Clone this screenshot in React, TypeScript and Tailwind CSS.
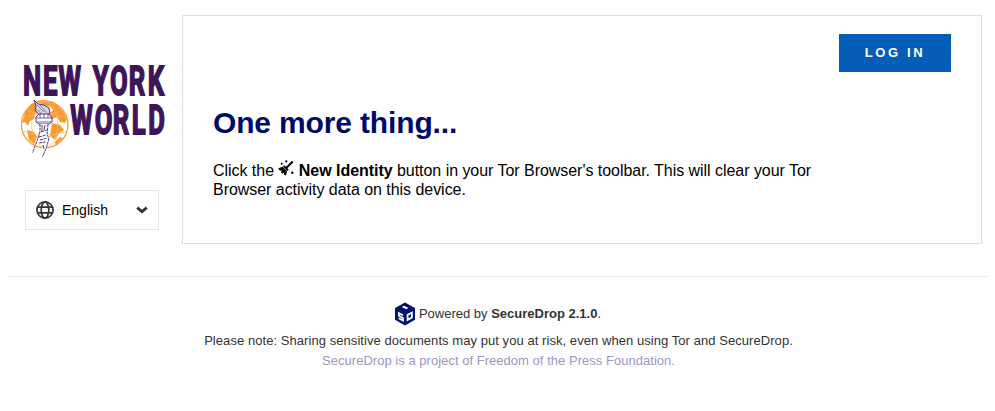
function Logo() {
  return (
    <svg className="block h-[98px] w-[150px] overflow-visible" viewBox="18 62 150 98" role="img" aria-label="New York World">
      <g fill="#3d1558" fontFamily="Roboto, sans-serif" fontWeight="700" fontSize="41.4" stroke="#3d1558" strokeWidth="1.8">
        <text transform="scale(.62 1)" x="37.3 69.2 94.4" y="95.3">NEW</text>
        <text transform="scale(.62 1)" x="149.5 177.3 207.6 238.2" y="95.3">YORK</text>
        <text transform="scale(.62 1)" x="113.4 153 182 212.4 239" y="133.6">WORLD</text>
      </g>
      <circle cx="44.7" cy="124.5" r="23.3" fill="#fff" stroke="#f9a13c" strokeWidth="1.3" />
      <g fill="#f99a2e">
        <path d="M26 110 31 104 38 102 36 107 39 111 35 114 34 119 30 121 28 126 25 122 22 123Z" />
        <path d="M48 102 56 104 63 111 67 119 65 123 60 122 57 117 52 119 49 114 53 110Z" />
        <path d="M27 130 34 132 37 137 34 144 29 140Z" />
        <path d="M52 123 60 125 64 130 59 133 55 140 50 136Z" />
        <path d="M36 101 43 100 54 102 51 107 44 105Z" />
        <path d="M54 143 60 137 63 138 57 144Z" />
      </g>
      <g fill="none" stroke="#fbb665" strokeWidth="0.7">
        <ellipse cx="44.7" cy="124.5" rx="13" ry="23" />
        <path d="M22 118Q45 110 68 118M22 131Q45 139 68 131M27 110Q45 119 63 110M28 141Q45 131 62 141" />
      </g>
      <g fill="#fff" stroke="#3d2470" strokeWidth="0.9" strokeLinejoin="round">
        <path d="M34 100 38 104 44 105 49 108 50 113 47 115H39L35 110 36 106Z" fill="#d9d6e5" />
        <path d="M37 105 44 112M40 105 47 113M36 109 42 114" strokeWidth="0.5" />
        <path d="M39 114H49L52 118V122L49 124H39L36 122V117Z" />
        <path d="M36 118H52M37 122H51M40 114V118M44 114V118M48 114V118" strokeWidth="0.7" />
        <path d="M40 124H48L47 135 49 139 47 147 42 156H41L43 144 36 145 33 153 32 152 38 139 40 135Z" stroke="none" />
        <path d="M40 124V132L37 141 32.5 153M48 124 47 135 49 138 47 146 42.5 157M41 132 47 130M39 137 46 135M40 140 47 138M39 143 46 142" fill="none" strokeDasharray="3 0.7" />
        <path d="M42 125V131M45 125 44 130M43 145 44 149" fill="none" />
      </g>
    </svg>
  );
}

function Globe() {
  return (
    <svg className="size-[18px]" viewBox="0 0 18 18" fill="none" stroke="#333" strokeWidth="1.7">
      <circle cx="9" cy="9" r="8.1" />
      <ellipse cx="9" cy="9" rx="3.8" ry="8.1" />
      <path d="M1.7 6.2H16.3M1.7 11.8H16.3" />
    </svg>
  );
}

function Broom() {
  return (
    <svg className="-mt-1 inline-block h-4 w-4 align-baseline" viewBox="0 0 16 16">
      <path d="M14.2 2 8.5 7.8" stroke="#000" strokeWidth="2" strokeLinecap="round" />
      <path d="M6.3 5.2 10.7 9.5 9.4 11 5 6.5Z" />
      <path d="M4.6 6.7 9 11 8.1 15.5 5.9 14.8 6 12.4 4.4 13.5 2.8 12.4 4.1 10.4 1.8 10.8.3 8.3Z" />
      <circle cx="3.7" cy="3.8" r="1" /><circle cx="8.3" cy="1.3" r="1.1" /><circle cx="14.3" cy="12.7" r="1.2" />
    </svg>
  );
}

function DropMark() {
  return (
    <svg className="h-6 w-5" viewBox="0 0 20 24">
      <path d="M10 .5 20 6V17.8L10 23.5 0 17.8V6Z" fill="#00146b" />
      <path d="M1 6.8 10 11.8 19 6.8M10 12V23" fill="none" stroke="#112b80" strokeWidth="0.5" />
      <path d="M6.7 5 9.2 3.7 13.3 6 11.3 7.3Z" fill="#fff" />
      <path d="M8 13.2 3.8 11.1V13.8L8 16V18.6L3.8 16.3" fill="none" stroke="#fff" strokeWidth="1.7" />
      <path d="M12.6 12.8 16.9 10.6V15.5L12.6 17.9Z" fill="none" stroke="#fff" strokeWidth="1.8" />
    </svg>
  );
}

export default function App() {
  return (
    <div className="h-[411px] bg-white pt-[15px] pr-[7px] pl-2 font-['Liberation_Sans',Arial,sans-serif] text-black">
      <div className="flex h-[262px] border-b border-[#e8e8ef]">
        <aside className="w-[174px] pt-[47px] pl-[10px]">
          <Logo />
          <button className="mt-[30px] ml-[7px] flex h-10 w-[134px] items-center border border-[#e5e5e5] px-[10px] text-[14px]">
            <Globe />
            <span className="ml-2">English</span>
            <svg className="ml-auto h-2 w-3" viewBox="0 0 12 8">
              <path d="M1.2 1.7 6 5.7 10.8 1.7" fill="none" stroke="#333" strokeWidth="2.8" />
            </svg>
          </button>
        </aside>
        <main className="h-[229px] w-[800px] border border-[#dedede] px-[30px] pt-[18px]">
          <div className="flex justify-end">
            <a className="flex h-[38px] w-[112px] items-center justify-center bg-[#045db7] text-[13px] font-bold tracking-[2.6px] text-white">LOG IN</a>
          </div>
          <h1 className="mt-[33px] text-[30px] leading-[36px] font-bold tracking-[-0.15px] text-[#000a6b]">One more thing...</h1>
          <p className="mt-[20px] w-[620px] text-[16px] leading-[19px] tracking-[-0.04px]">
            Click the <Broom /> <strong>New Identity</strong> button in your Tor Browser's toolbar. This will clear your Tor<br />Browser activity data on this device.
          </p>
        </main>
      </div>
      <footer className="pt-[25px] text-center text-[13px] leading-5 text-[#333]">
        <div className="flex h-6 items-center justify-center gap-1">
          <DropMark />
          <span>Powered by <strong>SecureDrop 2.1.0</strong>.</span>
        </div>
        <p className="mt-[5px] pl-px tracking-[0.06px]">Please note: Sharing sensitive documents may put you at risk, even when using Tor and SecureDrop.</p>
        <p className="pl-px tracking-[0.03px] text-[#9d96bd]">SecureDrop is a project of Freedom of the Press Foundation.</p>
      </footer>
    </div>
  );
}
